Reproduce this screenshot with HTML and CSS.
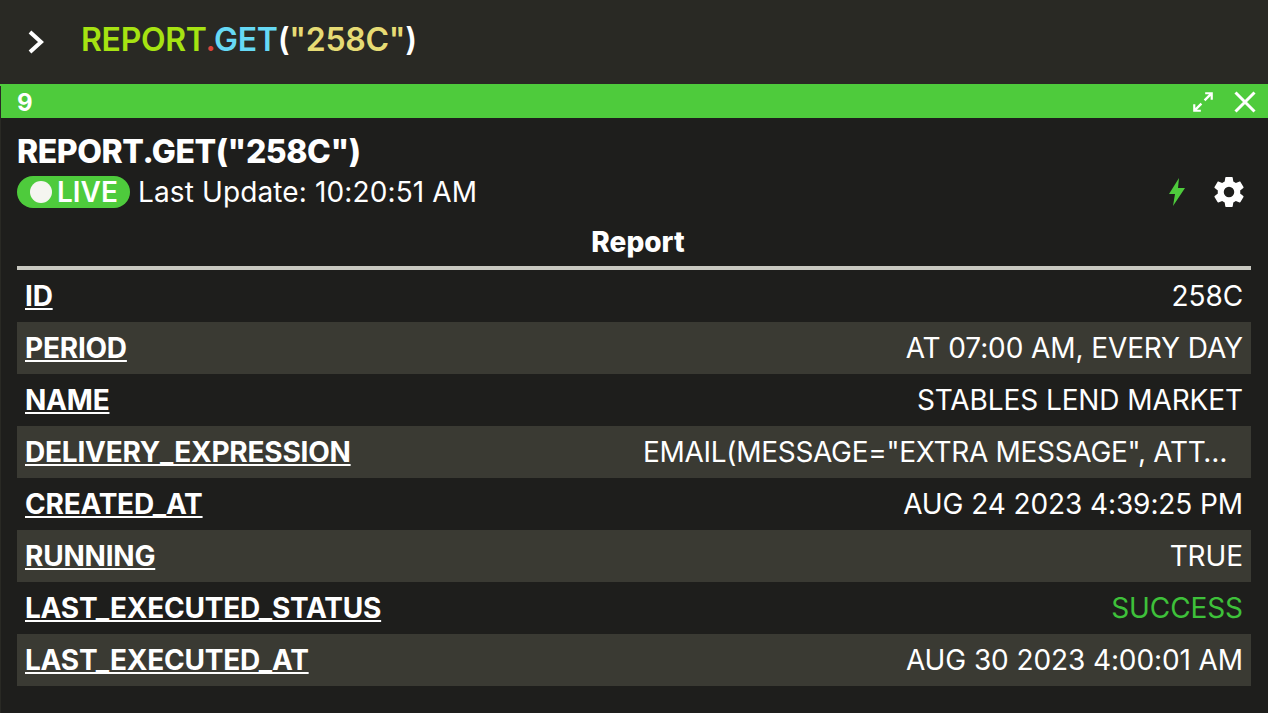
FILE: index.html
```html
<!DOCTYPE html>
<html lang="en">
<head>
<meta charset="utf-8">
<title>Report</title>
<link rel="stylesheet" href="styles.css">
</head>
<body>
<header class="prompt">
  <svg class="chevron" width="18" height="26" viewBox="0 0 18 26"><path d="M3 3l11 10-11 10" fill="none" stroke="#fff" stroke-width="4"/></svg>
  <div class="query"><span class="q-name">REPORT</span><span class="q-dot">.</span><span class="q-fn">GET</span><span class="q-par">(</span><span class="q-str">"258C"</span><span class="q-par">)</span></div>
</header>
<main class="panel">
  <div class="panel-bar">
    <span class="panel-num">9</span>
    <div class="panel-actions">
      <svg class="icon-expand" width="24" height="24" viewBox="0 0 22 22"><path d="M13 2h7v7h-2V5.500l-4.800 4.800-1.500-1.500L16.500 4H13zM2 13h2v3.500l4.800-4.800 1.500 1.500L5.500 18H9v2H2z" fill="#fff"/></svg>
      <svg class="icon-close" width="24" height="24" viewBox="0 0 24 24"><path d="M2.500 2.500l19 19M21.500 2.500l-19 19" stroke="#fff" stroke-width="3" fill="none"/></svg>
    </div>
  </div>
  <div class="panel-body">
    <h1 class="title">REPORT.GET("258C")</h1>
    <div class="status-row">
      <span class="live"><span class="live-dot"></span>LIVE</span>
      <span class="updated">Last Update: 10:20:51 AM</span>
      <div class="tools">
        <svg width="18" height="30" viewBox="0 0 18 30"><path d="M11 1L1 17h6L5 29 17 11h-7z" fill="#4ecb3c"/></svg>
        <svg width="36" height="36" viewBox="0 0 24 24"><path fill="#fff" fill-rule="evenodd" d="M19.430 12.980c.04-.32.070-.640.070-.980s-.030-.660-.070-.980l2.110-1.650c.190-.150.240-.420.120-.640l-2-3.460c-.120-.220-.390-.300-.610-.220l-2.490 1c-.520-.400-1.080-.730-1.690-.980l-.380-2.650A.488.488 0 0 0 14 2h-4c-.250 0-.460.180-.490.420l-.380 2.650c-.610.250-1.170.590-1.690.980l-2.490-1c-.230-.090-.490 0-.610.220l-2 3.460c-.130.220-.070.490.120.640l2.110 1.650c-.040.320-.070.650-.070.980s.030.660.070.980l-2.110 1.650c-.190.150-.240.420-.120.640l2 3.460c.120.220.390.300.610.220l2.490-1c.520.400 1.080.730 1.690.980l.380 2.650c.030.240.240.420.490.420h4c.250 0 .460-.180.490-.420l.380-2.650c.610-.250 1.170-.590 1.690-.980l2.490 1c.230.090.490 0 .610-.220l2-3.460c.120-.220.070-.490-.120-.640zM12 15.500a3.500 3.500 0 1 1 0-7 3.500 3.500 0 0 1 0 7z"/></svg>
      </div>
    </div>
    <h2 class="table-title">Report</h2>
    <div class="table">
      <div class="row"><a class="key">ID</a><span class="val">258C</span></div>
      <div class="row alt"><a class="key">PERIOD</a><span class="val">AT 07:00 AM, EVERY DAY</span></div>
      <div class="row"><a class="key">NAME</a><span class="val">STABLES LEND MARKET</span></div>
      <div class="row alt"><a class="key">DELIVERY_EXPRESSION</a><span class="val val-clip">EMAIL(MESSAGE="EXTRA MESSAGE", ATTACHMENT=TRUE)</span></div>
      <div class="row"><a class="key">CREATED_AT</a><span class="val">AUG 24 2023 4:39:25 PM</span></div>
      <div class="row alt"><a class="key">RUNNING</a><span class="val">TRUE</span></div>
      <div class="row"><a class="key">LAST_EXECUTED_STATUS</a><span class="val ok">SUCCESS</span></div>
      <div class="row alt"><a class="key">LAST_EXECUTED_AT</a><span class="val">AUG 30 2023 4:00:01 AM</span></div>
    </div>
  </div>
</main>
</body>
</html>
```
FILE: styles.css
```css
* { box-sizing: border-box; }
html, body { margin: 0; height: 100%; overflow: hidden; }
body {
  background: #292924;
  color: #fff;
  font-family: Inter, "Liberation Sans", sans-serif;
  font-optical-sizing: none;
  font-feature-settings: "calt" 0;
}
.prompt {
  height: 84px;
  display: flex;
  align-items: center;
  padding-left: 27px;
  gap: 36px;
}
.chevron { flex: none; }
.query { font-size: 32px; font-weight: 600; line-height: 38px; margin-top: -4px; letter-spacing: -0.3px; }
.q-name { color: #a6e312; }
.q-dot { color: #d9443a; }
.q-fn { color: #66d9f5; }
.q-str { color: #e6db74; }
.q-par { color: #fff; }
.panel {
  height: 629px;
  border-top: 2px solid #4ecb3c;
}
.panel-bar {
  height: 32px;
  margin-left: 1px;
  padding-left: 16px;
  display: flex;
  align-items: center;
  justify-content: space-between;
  background: #4ecb3c;
}
.panel-num { font-size: 24px; font-weight: 700; }
.panel-actions { display: flex; align-items: center; gap: 18px; padding-right: 11px; }
.panel-actions svg { display: block; }
.panel-body { margin-left: 1px; height: 597px; padding: 0 17px 0 16px; background: #1e1e1c; }
.title { margin: 0; padding-top: 16px; font-size: 32px; line-height: 36px; font-weight: 800; letter-spacing: -0.44px; }
.status-row { display: flex; align-items: center; height: 32px; margin-top: 6px; }
.live {
  display: flex;
  align-items: center;
  gap: 5px;
  height: 32px;
  padding: 0 12px 0 13px;
  border-radius: 16px;
  background: #4ecb3c;
  font-size: 28px;
  font-weight: 600;
}
.live-dot { width: 22px; height: 22px; border-radius: 50%; background: #f5f5f0; }
.updated { margin-left: 8px; font-size: 28px; letter-spacing: 0.13px; }
.tools { margin-left: auto; display: flex; align-items: center; gap: 25px; padding-right: 4px; }
.tools svg { display: block; }
.table-title { margin: 0; padding: 18px 0 0 8px; height: 58px; text-align: center; font-size: 28px; line-height: 32px; font-weight: 800; }
.table { border-top: 4px solid #c8c8c0; }
.row {
  display: flex;
  justify-content: space-between;
  align-items: center;
  height: 52px;
  padding: 0 8px;
  font-size: 28px;
}
.alt { background: #3a3a33; }
.key { font-weight: 700; text-decoration: underline; white-space: nowrap; letter-spacing: -0.22px; }
.val { white-space: nowrap; letter-spacing: -0.1px; }
.val-clip { width: 600px; overflow: hidden; text-overflow: ellipsis; padding-right: 12px; letter-spacing: -0.3px; }
.ok { color: #3ec13a; }
```
